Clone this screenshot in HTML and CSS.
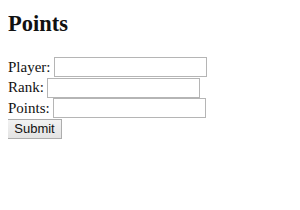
FILE: index.html
```html
<!DOCTYPE html>
<html lang="en">
<head>
    <meta charset="UTF-8">
    <title>Points</title>
    <link rel="stylesheet" href="styles.css">
</head>
<body>
    <h2 class="title">Points</h2>
    <form class="points-form">
        <label class="row">Player: <input type="text" name="player" class="field"></label>
        <label class="row">Rank: <input type="text" name="rank" class="field"></label>
        <label class="row">Points: <input type="text" name="points" class="field"></label>
        <button type="submit" class="submit-btn">Submit</button>
    </form>
</body>
</html>
```

FILE: styles.css
```css
body {
    font-family: 'Liberation Serif', serif;
    font-size: 15px;
    margin: 11px 8px 8px 8px;
    background-color: #ffffff;
    color: #111;
}
.title {
    font-size: 22.5px;
    margin: 0 0 20px 0;
}
.row {
    display: flex;
    align-items: center;
    gap: 3px;
    height: 20.5px;
}
.field {
    box-sizing: border-box;
    width: 153px;
    height: 20px;
    margin: 0;
    padding: 1px 2px;
    border: 1px solid #b5b5b5;
    font-family: 'Liberation Sans', sans-serif;
    font-size: 13px;
}
.submit-btn {
    box-sizing: border-box;
    width: 55px;
    height: 20px;
    margin: 0 0 0 -1px;
    padding: 0;
    border: 1px solid #adadad;
    border-radius: 0;
    background: linear-gradient(#f2f2f2, #e3e3e3);
    color: #111;
    font-family: 'Liberation Sans', sans-serif;
    font-size: 13px;
}
```
